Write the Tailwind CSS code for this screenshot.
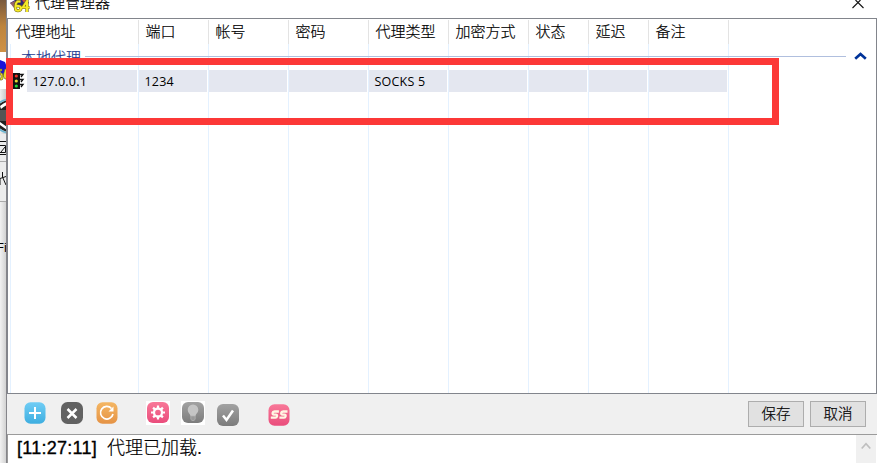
<!DOCTYPE html>
<html lang="zh-CN">
<head>
<meta charset="utf-8">
<title>代理管理器</title>
<script src="https://cdn.jsdelivr.net/npm/@tailwindcss/browser@4"></script>
</head>
<body class="relative flex h-[463px] w-[877px] overflow-hidden bg-white font-['Liberation_Sans','Noto_Sans_CJK_SC',sans-serif] text-black">
<!-- Window behind -->
<aside class="flex h-full w-[7px] shrink-0 flex-col overflow-hidden border-r border-[#85858a] bg-[#ececec]">
  <div class="h-[52px] shrink-0 bg-linear-to-b from-[#79593c] via-[#bd843d] to-[#cf9145]"></div>
  <div class="h-[37px] shrink-0 bg-white">
    <svg class="h-[37px] w-[7px]" viewBox="0 0 7 37"><path d="M0 8 5 10 7 15V25L2 24 0 18Z" fill="#1a13d8"/><path d="M0 17h2v2H0v2h2l1 2v4l-1 1H0v-2h1v-3H0ZM5 17h2v10H5l-2-3Z" fill="#e7dc2c" stroke="#665d20" stroke-width=".6"/></svg>
  </div>
  <div class="h-[45px] shrink-0 bg-linear-to-r from-[#eee] to-[#c9c9c9]">
    <svg class="h-[45px] w-[7px]" viewBox="0 0 7 45"><circle cx="10" cy="27" r="16" fill="#222"/><circle cx="10" cy="27" r="17" fill="none" stroke="#69b6d2" stroke-width="1.5"/><path d="M0 17q5-4 7-4v3Q4 17 1 20ZM0 33l7 5v3l-7-5Z" fill="#fff"/><path d="M0 21h6v11H0Z" fill="#555"/></svg>
  </div>
  <div class="h-[28px] shrink-0 border-b border-[#aaa]"><svg class="h-[27px] w-[7px]" viewBox="0 0 7 27" fill="none" stroke="#111"><path d="M0 7.5h6M0 11.5h5.5v7H0M1 18l4-5M0 20.5h7"/></svg></div>
  <div class="h-[40px] shrink-0 border-b border-[#aaa]"><svg class="h-[39px] w-[7px]" viewBox="0 0 7 39" fill="none" stroke="#111"><path d="M2.5 10V15L6 23M0 16.5 6 14.5M0 17v6"/></svg></div>
  <div class="flex-1 bg-linear-to-r from-[#f2f2f2] to-[#d2d2d2] pt-[38px] text-[13px] leading-[16px] whitespace-nowrap"><span class="-ml-[4px]">Fi</span></div>
</aside>

<main class="flex h-full w-[870px] shrink-0 flex-col">
  <header class="flex h-[18px] shrink-0 items-start overflow-hidden pl-[3px]">
    <svg class="h-[14px] w-[21px] shrink-0" viewBox="0 0 21 14"><path d="M0 3 5 0H17L19 3 14 6 6 7Z" fill="#302a77"/><path d="M0 3 5 1 8 4 4 8Z" fill="#95636c"/><path d="M12 0h6v3l-3 1Z" fill="#cc5140"/><path d="M10.5 1.500H7.400Q5.500 3 5.500 6v2.200q0 2.500 2.500 2.500t3-2.500q0-2.500-4.500-2.500M17 12V1L12.700 7.500H19.500" fill="none" stroke="#6f6819" stroke-width="3.200"/><path d="M10.500 1.500H7.400Q5.500 3 5.500 6v2.200q0 2.500 2.500 2.500t3-2.500q0-2.500-4.500-2.500M17 12V1L12.700 7.500H19.500" fill="none" stroke="#f5e928" stroke-width="2"/></svg>
    <h1 class="-mt-[7px] ml-[4px] text-[15px] leading-[20px] font-light [-webkit-text-stroke:0.2px_black]">代理管理器</h1>
    <svg class="mr-[13px] ml-auto h-[9px] w-[12px]" viewBox="0 0 12 9" fill="none" stroke="#111" stroke-width="1.1"><path d="M.5 8 8.5 0M11.5 8 3.5 0"/></svg>
  </header>

  <section class="relative flex h-[376px] shrink-0 flex-col border border-[#82858c] bg-white font-['Noto_Sans_CJK_SC',sans-serif]">
    <!-- Column rules -->
    <div class="absolute inset-y-0 left-[2px] grid w-[719px] grid-cols-[129px_70px_80px_80px_80px_80px_60px_60px_80px] pt-[25px]">
      <i class="border-r border-l border-[#e4f1ff]"></i><i class="border-r border-[#e4f1ff]"></i><i class="border-r border-[#e4f1ff]"></i><i class="border-r border-[#e4f1ff]"></i><i class="border-r border-[#e4f1ff]"></i><i class="border-r border-[#e4f1ff]"></i><i class="border-r border-[#e4f1ff]"></i><i class="border-r border-[#e4f1ff]"></i><i class="border-r border-[#e4f1ff]"></i>
    </div>
    <div class="relative mt-px grid h-[24px] shrink-0 grid-cols-[131px_70px_80px_80px_80px_80px_60px_60px_80px] text-[15px] leading-[21px] font-light [-webkit-text-stroke:0.2px_black] [&>span]:border-r [&>span]:border-[#e3e3e3] [&>span]:pl-[6.5px]">
      <span><b class="ml-px font-light">代理地址</b></span><span>端口</span><span>帐号</span><span>密码</span><span>代理类型</span><span>加密方式</span><span>状态</span><span>延迟</span><span>备注</span>
    </div>
    <div class="relative flex h-[26px] shrink-0 items-start pl-[13px] text-[#1c3a91]">
      <span class="w-[64px] text-[15px] leading-[25px] font-light [-webkit-text-stroke:0.2px_#1c3a91]">本地代理</span>
      <i class="mt-[12px] h-px w-[761px] bg-[#b0bfde]"></i>
      <svg class="mt-[8px] ml-[8px] h-[8px] w-[13px]" viewBox="0 0 13 8" fill="none" stroke="#003399" stroke-width="2.7"><path d="M1.2 6.8 6.5 2 11.8 6.8"/></svg>
    </div>
    <div class="relative flex h-[22px] shrink-0 pl-[5px] font-['Open_Sans',sans-serif] text-[12.5px] leading-[23px] tracking-[0.2px]">
      <svg class="mt-[2px] h-[18px] w-[14px] shrink-0" viewBox="0 0 14 18"><path d="M0 1h7v16H0Z" fill="#111"/><path d="M7 2.500h3L8 5M7 7.500h3L8 10M7 12.500h3l-2 2.500" fill="none" stroke="#111" stroke-width="1.300"/><circle cx="3.3" cy="4" r="1.6" fill="#ef3026"/><circle cx="3.3" cy="9" r="1.6" fill="#e8da32"/><circle cx="3.3" cy="14" r="1.6" fill="#24d839"/></svg>
      <div class="grid h-[22px] grid-cols-[110px_68px_78px_78px_78px_78px_58px_58px_78px] grid-rows-[22px] gap-x-[2px] [&>span]:bg-[#e4e7f0] [&>span]:pl-[5.5px]">
        <span>127.0.0.1</span><span>1234</span><span></span><span></span><span>SOCKS 5</span><span></span><span></span><span></span><span></span>
      </div>
    </div>
  </section>

  <section class="flex h-[40px] shrink-0 items-start bg-[#f0f0f0] pt-[7px] pl-[17px]">
    <svg class="mt-px h-[22px] w-[22px]" viewBox="0 0 22 22"><defs><linearGradient id="blue" x2="0" y2="1"><stop stop-color="#70cdf5"/><stop offset="1" stop-color="#3eaee0"/></linearGradient><linearGradient id="pink" x2="0" y2="1"><stop stop-color="#f87898"/><stop offset="1" stop-color="#ea4d7c"/></linearGradient><linearGradient id="gold" x2="0" y2="1"><stop stop-color="#f4b663"/><stop offset="1" stop-color="#e59345"/></linearGradient><linearGradient id="grey" x2="0" y2="1"><stop stop-color="#a2a2a2"/><stop offset="1" stop-color="#7c7c7c"/></linearGradient></defs><rect x=".5" y=".3" width="21" height="21.4" rx="6" fill="url(#blue)"/><path d="M11 5v12M5 11h12" stroke="#fff" stroke-width="2"/></svg>
    <svg class="mt-px ml-[15px] h-[22px] w-[22px]" viewBox="0 0 22 22"><rect width="22" height="22" rx="6.5" fill="#626262"/><path d="m6.5 7 9 9M15.500 7l-9 9" stroke="#fff" stroke-width="2.5"/></svg>
    <svg class="mt-px ml-[13px] h-[22px] w-[22px]" viewBox="0 0 22 22"><rect x=".5" y=".3" width="21" height="21.4" rx="6" fill="url(#gold)"/><path d="M15.500 6.500A6.300 6.300 0 1 0 17 12" fill="none" stroke="#fff" stroke-width="1.7"/><path d="M17.500 4.500v5h-5Z" fill="#fff"/></svg>
    <svg class="ml-[28px] h-[24px] w-[24px]" viewBox="0 0 24 24"><path d="M0 0h24v24H0Z" fill="#fff"/><rect x="1" y="1" width="22" height="21" rx="6" fill="url(#pink)"/><circle cx="12" cy="11.500" r="4" fill="none" stroke="#fff" stroke-width="2.3"/><path d="M12 4.500v3M12 15.500v3M5 11.500h3M16 11.500h3M7.100 6.600l2 2M14.900 14.400l2 2M16.900 6.600l-2 2M9.100 14.400l-2 2" stroke="#fff" stroke-width="2.200"/></svg>
    <svg class="ml-[11px] h-[24px] w-[24px]" viewBox="0 0 24 24"><path d="M0 0h24v24H0Z" fill="#fff"/><rect x="1" y="1" width="22" height="21" rx="6" fill="url(#grey)"/><path d="M12 3.500a5.300 5.300 0 0 0-5.300 5.300c0 3 2.500 4 2.800 6.200h5c.3-2.200 2.800-3.200 2.800-6.200A5.300 5.300 0 0 0 12 3.500Z" fill="#c5c5c5"/><path d="M9.800 15h4.400v3l-1 1.500h-2.400l-1-1.500Z" fill="#999" stroke="#b5b5b5" stroke-width=".7"/></svg>
    <svg class="mt-[3px] ml-[12px] h-[22px] w-[22px]" viewBox="0 0 22 22"><rect width="22" height="22" rx="6" fill="url(#grey)"/><path d="m6 11.500 3.500 4.500L16 6.500" fill="none" stroke="#fff" stroke-width="2.500"/></svg>
    <svg class="mt-[3px] ml-[29px] h-[22px] w-[22px]" viewBox="0 0 22 22"><rect x=".5" y=".3" width="21" height="21.4" rx="6" fill="url(#pink)"/><path d="M10.900 7.500H6.500Q4.800 7.500 4.600 9T6 10.600h1.800q1.500 0 1.200 1.600t-1.800 1.500H2.800M19.500 7.500h-4.400q-1.700 0-1.900 1.500t1.400 1.600h1.800q1.500 0 1.200 1.600t-1.800 1.500h-4.400" fill="none" stroke="#fff7e3" stroke-width="2.300"/></svg>
    <div class="mr-[11px] ml-auto flex gap-[6px] font-['Noto_Sans_CJK_SC',sans-serif] text-[14.5px] leading-[21px]">
      <button class="h-[26px] w-[56px] border border-[#adadad] bg-[#e1e1e1] pb-[3px] font-light [-webkit-text-stroke:0.2px_black]">保存</button>
      <button class="h-[26px] w-[56px] border border-[#adadad] bg-[#e1e1e1] pb-[3px] font-light [-webkit-text-stroke:0.2px_black]">取消</button>
    </div>
  </section>
  <footer class="flex flex-1 justify-between border-t border-l border-[#9b9b9b] bg-white pl-[9px]">
    <p class="text-[18px] leading-[26px] whitespace-pre"><span class="tracking-[0.25px] [-webkit-text-stroke:0.35px_black]">[11:27:11]</span><span class="ml-[10px] font-light [-webkit-text-stroke:0.2px_black]">代理已加载.</span></p>
    <div class="mr-px w-[20px] bg-[#f0f0f0]"><svg class="mt-[7px] ml-[5px] h-[8px] w-[10px]" viewBox="0 0 10 8" fill="none" stroke="#bfbfbf" stroke-width="1.7"><path d="M.7 6.500 5 1.800 9.300 6.500"/></svg></div>
  </footer>
</main>

<!-- Highlight frame -->
<div class="absolute top-[58px] left-[6px] h-[67px] w-[773px] border-[7px] border-[#fc3837]"></div>
</body>
</html>
